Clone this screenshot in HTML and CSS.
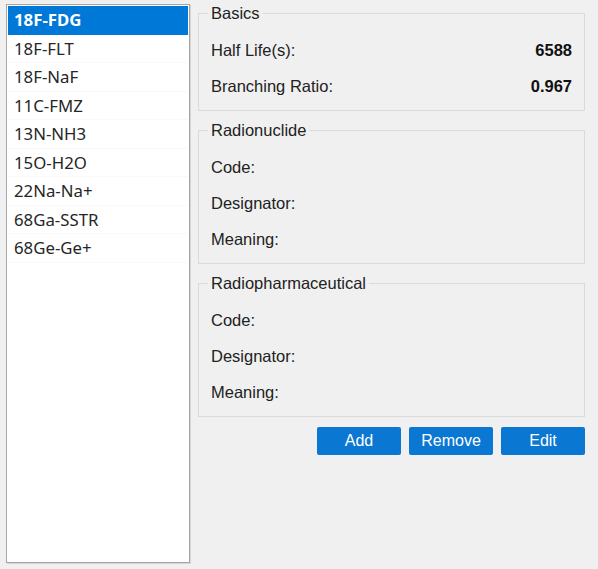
FILE: index.html
```html
<!DOCTYPE html>
<html lang="en">
<head>
<meta charset="utf-8">
<title>Radiopharmaceuticals</title>
<link rel="stylesheet" href="styles.css">
</head>
<body>
<div class="window">
  <ul class="list">
    <li class="item selected">18F-FDG</li>
    <li class="item">18F-FLT</li>
    <li class="item">18F-NaF</li>
    <li class="item">11C-FMZ</li>
    <li class="item">13N-NH3</li>
    <li class="item">15O-H2O</li>
    <li class="item">22Na-Na+</li>
    <li class="item">68Ga-SSTR</li>
    <li class="item">68Ge-Ge+</li>
  </ul>
  <div class="details">
    <fieldset class="group">
      <legend class="group-title">Basics</legend>
      <div class="row"><span class="label">Half Life(s):</span><span class="value">6588</span></div>
      <div class="row"><span class="label">Branching Ratio:</span><span class="value">0.967</span></div>
    </fieldset>
    <fieldset class="group">
      <legend class="group-title">Radionuclide</legend>
      <div class="row"><span class="label">Code:</span></div>
      <div class="row"><span class="label">Designator:</span></div>
      <div class="row"><span class="label">Meaning:</span></div>
    </fieldset>
    <fieldset class="group">
      <legend class="group-title">Radiopharmaceutical</legend>
      <div class="row"><span class="label">Code:</span></div>
      <div class="row"><span class="label">Designator:</span></div>
      <div class="row"><span class="label">Meaning:</span></div>
    </fieldset>
    <div class="buttons">
      <button class="btn">Add</button>
      <button class="btn">Remove</button>
      <button class="btn">Edit</button>
    </div>
  </div>
</div>
</body>
</html>
```

FILE: styles.css
```css
html, body {
  margin: 0;
  padding: 0;
  background: #f0f0f0;
}

.window {
  width: 598px;
  height: 569px;
  box-sizing: border-box;
  padding: 4px 0 0 6px;
  display: flex;
  gap: 8px;
  font-family: "Liberation Sans", Arial, sans-serif;
  color: #222;
}

.list {
  list-style: none;
  margin: 0;
  padding: 1px;
  width: 184px;
  height: 559px;
  box-sizing: border-box;
  background: #fff;
  border: 1px solid #a6a6a6;
  box-shadow: 1px 1px 0 #d4d4d4;
  font-family: "Noto Sans", "Open Sans", sans-serif;
  font-size: 16.8px;
  color: #262626;
}

.item {
  height: 28.5px;
  line-height: 28.5px;
  padding-left: 6px;
  box-sizing: border-box;
  border-bottom: 1px solid #f9f9f9;
  white-space: nowrap;
}

.item.selected {
  background: #0078d7;
  color: #fff;
  font-weight: bold;
  border-bottom-color: #0078d7;
}

.details {
  width: 387px;
  display: flex;
  flex-direction: column;
  gap: 9px;
  margin-top: -1px;
}

.group {
  margin: 0;
  padding: 9px 12px 6px 12px;
  border: 1px solid #dadada;
  min-width: 0;
}

.group-title {
  padding: 0 3px;
  margin-left: -3px;
  font-size: 16.5px;
  line-height: 20px;
  color: #222;
}

.row {
  height: 36px;
  display: flex;
  align-items: center;
  justify-content: space-between;
  font-size: 16.5px;
}

.value {
  font-weight: bold;
  color: #111;
}

.buttons {
  display: flex;
  justify-content: flex-end;
  gap: 8px;
  margin-top: 1px;
}

.btn {
  width: 84px;
  height: 28px;
  border: none;
  border-radius: 2px;
  background: #0a78d2;
  color: #fff;
  font-family: "Liberation Sans", Arial, sans-serif;
  font-size: 16px;
  padding: 0;
}
```
